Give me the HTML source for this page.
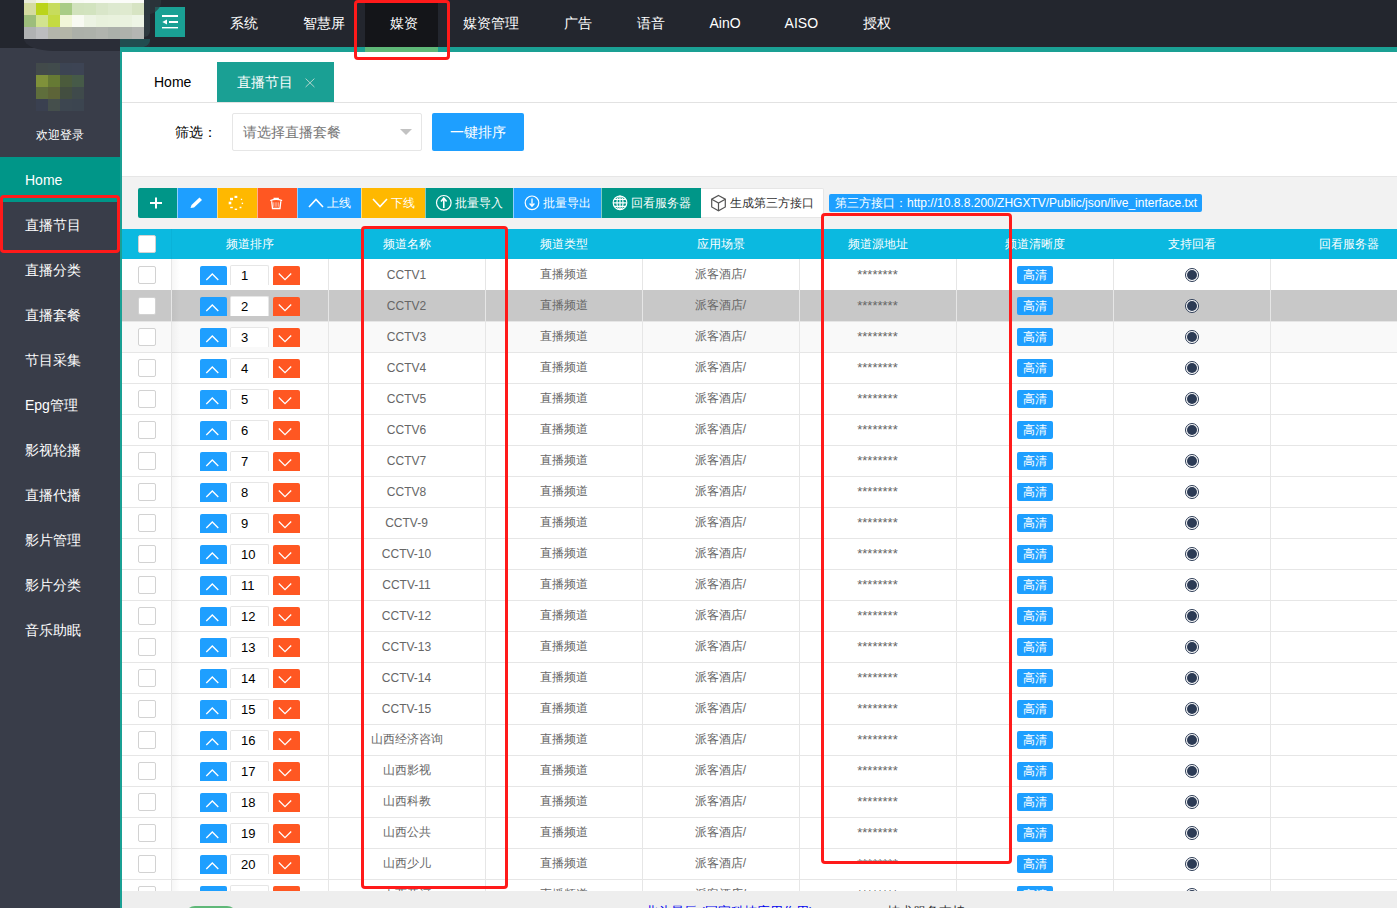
<!DOCTYPE html>
<html><head><meta charset="utf-8"><style>
*{box-sizing:border-box;margin:0;padding:0}
html,body{width:1397px;height:908px;overflow:hidden}
body{position:relative;font-family:"Liberation Sans",sans-serif;background:#f2f2f2;color:#333}
.abs{position:absolute}
.hdr{left:0;top:0;width:1397px;height:48px;background:#23262e}
.nav{top:1px;height:48px;line-height:44px;color:#fff;font-size:14px;text-align:center;white-space:nowrap}
.side{left:0;top:48px;width:120px;height:860px;background:#393d49}
.sitem{left:0;width:120px;height:45px;line-height:47px;padding-left:25px;color:#fff;font-size:14px}
.tb{top:188px;height:30px;line-height:30px;color:#fff;font-size:12px;text-align:center;white-space:nowrap}
.th{top:229px;height:30px;line-height:30px;color:#fff;font-size:12px;text-align:center;white-space:nowrap}
.td{height:31px;line-height:31px;color:#666;font-size:12px;text-align:center;white-space:nowrap}
.vl{width:1px;background:#e6e6e6}
.hl{height:1px;background:#e6e6e6;left:122px;width:1275px}
.cb{width:18px;height:18px;border:1px solid #d2d2d2;background:#fff;border-radius:2px}
.up{width:27px;height:19px;background:#1e9fff;border-radius:2px 2px 0 0}
.dn{width:27px;height:19px;background:#ff5722;border-radius:2px 2px 0 0}
.inp{width:39px;height:20px;background:#fff;border:1px solid #e6e6e6;border-bottom:none;font-size:13px;line-height:19px;color:#000;padding-left:10px;border-radius:2px 2px 0 0;text-align:left}
.badge{width:36px;height:18px;line-height:18px;background:#1e9fff;color:#fff;font-size:12px;border-radius:2px;text-align:center}
.radio{width:14px;height:14px;border-radius:50%;border:1px solid #2c3b55;background:#fff}
.radio:after{content:"";position:absolute;left:1px;top:1px;width:10px;height:10px;border-radius:50%;background:#2c3b55}
.red{border:3px solid #ff1a1a;border-radius:4px}
.ast{padding-top:2px}
</style></head><body>

<div class="abs hdr"></div>
<div class="abs" style="left:24px;top:0px;width:12px;height:3px;background:#e8ebd8"></div>
<div class="abs" style="left:36px;top:0px;width:12px;height:3px;background:#f3f5e6"></div>
<div class="abs" style="left:48px;top:0px;width:12px;height:3px;background:#fafbf5"></div>
<div class="abs" style="left:60px;top:0px;width:12px;height:3px;background:#f7f9f1"></div>
<div class="abs" style="left:72px;top:0px;width:12px;height:3px;background:#f9fbf6"></div>
<div class="abs" style="left:84px;top:0px;width:12px;height:3px;background:#fbfcf8"></div>
<div class="abs" style="left:96px;top:0px;width:12px;height:3px;background:#fbfcf8"></div>
<div class="abs" style="left:108px;top:0px;width:12px;height:3px;background:#fbfcf8"></div>
<div class="abs" style="left:120px;top:0px;width:12px;height:3px;background:#fbfcf8"></div>
<div class="abs" style="left:132px;top:0px;width:12px;height:3px;background:#fbfcf8"></div>
<div class="abs" style="left:24px;top:3px;width:12px;height:12px;background:#d4dba0"></div>
<div class="abs" style="left:36px;top:3px;width:12px;height:12px;background:#bbd41a"></div>
<div class="abs" style="left:48px;top:3px;width:12px;height:12px;background:#c7dc5c"></div>
<div class="abs" style="left:60px;top:3px;width:12px;height:12px;background:#a9cc86"></div>
<div class="abs" style="left:72px;top:3px;width:12px;height:12px;background:#d1e2bd"></div>
<div class="abs" style="left:84px;top:3px;width:12px;height:12px;background:#d2e3bf"></div>
<div class="abs" style="left:96px;top:3px;width:12px;height:12px;background:#d9e6c9"></div>
<div class="abs" style="left:108px;top:3px;width:12px;height:12px;background:#dde9cf"></div>
<div class="abs" style="left:120px;top:3px;width:12px;height:12px;background:#dfeacf"></div>
<div class="abs" style="left:132px;top:3px;width:12px;height:12px;background:#d7e4c3"></div>
<div class="abs" style="left:24px;top:15px;width:12px;height:12px;background:#9dbd7b"></div>
<div class="abs" style="left:36px;top:15px;width:12px;height:12px;background:#d2e38f"></div>
<div class="abs" style="left:48px;top:15px;width:12px;height:12px;background:#c4da42"></div>
<div class="abs" style="left:60px;top:15px;width:12px;height:12px;background:#f1f6d8"></div>
<div class="abs" style="left:72px;top:15px;width:12px;height:12px;background:#f8faf3"></div>
<div class="abs" style="left:84px;top:15px;width:12px;height:12px;background:#ecf3e3"></div>
<div class="abs" style="left:96px;top:15px;width:12px;height:12px;background:#e8f1dc"></div>
<div class="abs" style="left:108px;top:15px;width:12px;height:12px;background:#e9f2dd"></div>
<div class="abs" style="left:120px;top:15px;width:12px;height:12px;background:#eaf2df"></div>
<div class="abs" style="left:132px;top:15px;width:12px;height:12px;background:#eef5e6"></div>
<div class="abs" style="left:24px;top:27px;width:12px;height:12px;background:#b0b2b3"></div>
<div class="abs" style="left:36px;top:27px;width:12px;height:12px;background:#bcbdbf"></div>
<div class="abs" style="left:48px;top:27px;width:12px;height:12px;background:#b3b5ab"></div>
<div class="abs" style="left:60px;top:27px;width:12px;height:12px;background:#b4b6a8"></div>
<div class="abs" style="left:72px;top:27px;width:12px;height:12px;background:#acb0a9"></div>
<div class="abs" style="left:84px;top:27px;width:12px;height:12px;background:#adb1aa"></div>
<div class="abs" style="left:96px;top:27px;width:12px;height:12px;background:#b1b4ae"></div>
<div class="abs" style="left:108px;top:27px;width:12px;height:12px;background:#abb0aa"></div>
<div class="abs" style="left:120px;top:27px;width:12px;height:12px;background:#aeb2ac"></div>
<div class="abs" style="left:132px;top:27px;width:12px;height:12px;background:#b4b6b3"></div>
<div class="abs" style="left:155px;top:7px;width:30px;height:30px;background:#1aa094"></div>
<svg class="abs" style="left:155px;top:7px" width="30" height="30" viewBox="0 0 30 30"><g fill="#fff"><rect x="7" y="8" width="16" height="2"/><rect x="14" y="14" width="9" height="2"/><rect x="7" y="20" width="16" height="1.4"/><path d="M7.3 15 L12 12.6 L12 17.4 Z"/></g></svg>
<div class="abs" style="left:144px;top:0;width:6px;height:37px;border-radius:0 0 6px 0;background:#2e393f"></div>
<div class="abs" style="left:144px;top:0;width:17px;height:15px;border-radius:0 0 17px 0/0 0 13px 0;background:rgba(46,57,63,.7)"></div>
<div class="abs" style="left:365px;top:0;width:73px;height:47px;background:#141519"></div>
<div class="abs" style="left:120px;top:47px;width:1277px;height:5px;background:#1aa094"></div>
<div class="abs" style="left:365px;top:47px;width:73px;height:5px;background:#5fb878"></div>
<div class="abs nav" style="left:194.4px;width:100px">系统</div>
<div class="abs nav" style="left:274px;width:100px">智慧屏</div>
<div class="abs nav" style="left:353.5px;width:100px">媒资</div>
<div class="abs nav" style="left:440.7px;width:100px">媒资管理</div>
<div class="abs nav" style="left:527.5px;width:100px">广告</div>
<div class="abs nav" style="left:600.6px;width:100px">语音</div>
<div class="abs nav" style="left:675px;width:100px">AinO</div>
<div class="abs nav" style="left:751.3px;width:100px">AISO</div>
<div class="abs nav" style="left:826.5px;width:100px">授权</div>
<div class="abs side"></div>
<div class="abs" style="left:36px;top:63px;width:12px;height:12px;background:#424a4a"></div>
<div class="abs" style="left:48px;top:63px;width:12px;height:12px;background:#414b4c"></div>
<div class="abs" style="left:60px;top:63px;width:12px;height:12px;background:#3c4453"></div>
<div class="abs" style="left:72px;top:63px;width:12px;height:12px;background:#3d4454"></div>
<div class="abs" style="left:36px;top:75px;width:12px;height:12px;background:#7f913a"></div>
<div class="abs" style="left:48px;top:75px;width:12px;height:12px;background:#667a34"></div>
<div class="abs" style="left:60px;top:75px;width:12px;height:12px;background:#4b5b3c"></div>
<div class="abs" style="left:72px;top:75px;width:12px;height:12px;background:#465a48"></div>
<div class="abs" style="left:36px;top:87px;width:12px;height:12px;background:#5f6e3c"></div>
<div class="abs" style="left:48px;top:87px;width:12px;height:12px;background:#5d6438"></div>
<div class="abs" style="left:60px;top:87px;width:12px;height:12px;background:#434e40"></div>
<div class="abs" style="left:72px;top:87px;width:12px;height:12px;background:#3f4a4b"></div>
<div class="abs" style="left:36px;top:99px;width:12px;height:12px;background:#3a4050"></div>
<div class="abs" style="left:48px;top:99px;width:12px;height:12px;background:#454f4c"></div>
<div class="abs" style="left:60px;top:99px;width:12px;height:12px;background:#3d4650"></div>
<div class="abs" style="left:72px;top:99px;width:12px;height:12px;background:#3c4550"></div>
<div class="abs" style="left:0;top:125px;width:120px;height:20px;line-height:20px;text-align:center;color:#fff;font-size:12px">欢迎登录</div>
<div class="abs" style="left:0;top:157px;width:120px;height:45px;background:#009688"></div>
<div class="abs sitem" style="top:157px">Home</div>
<div class="abs sitem" style="top:202px">直播节目</div>
<div class="abs sitem" style="top:247px">直播分类</div>
<div class="abs sitem" style="top:292px">直播套餐</div>
<div class="abs sitem" style="top:337px">节目采集</div>
<div class="abs sitem" style="top:382px">Epg管理</div>
<div class="abs sitem" style="top:427px">影视轮播</div>
<div class="abs sitem" style="top:472px">直播代播</div>
<div class="abs sitem" style="top:517px">影片管理</div>
<div class="abs sitem" style="top:562px">影片分类</div>
<div class="abs sitem" style="top:607px">音乐助眠</div>
<div class="abs" style="left:24px;top:39px;width:126px;height:12px;border-radius:0 0 10px 30px/0 0 6px 12px;background:#2a2d37"></div>
<div class="abs" style="left:120px;top:48px;width:2px;height:860px;background:#1aa094"></div>
<div class="abs" style="left:120px;top:39px;width:30px;height:9px;border-radius:0 0 12px 0/0 0 8px 0;background:#214c50"></div>
<div class="abs" style="left:120px;top:47px;width:1277px;height:5px;background:#1aa094"></div>
<div class="abs" style="left:122px;top:52px;width:1275px;height:124px;background:#fff"></div>
<div class="abs" style="left:365px;top:47px;width:73px;height:5px;background:#5fb878"></div>
<div class="abs" style="left:122px;top:102px;width:1275px;height:1px;background:#e2e2e2"></div>
<div class="abs" style="left:122px;top:176px;width:1275px;height:1px;background:#e6e6e6"></div>
<div class="abs" style="left:122px;top:52px;width:95px;height:50px;line-height:60px;padding-left:32px;font-size:14px;color:#000">Home</div>
<div class="abs" style="left:217px;top:62px;width:117px;height:40px;background:#1aa094;color:#fff;font-size:14px;line-height:40px;padding-left:20px">直播节目<svg style="position:absolute;left:88px;top:16px" width="10" height="10"><path d="M0.6 0.6 L9.4 9 M9.4 0.6 L0.6 9" stroke="#c3dbd3" stroke-width="0.9"/></svg></div>
<div class="abs" style="left:175px;top:122px;height:20px;line-height:20px;font-size:14px;color:#000">筛选：</div>
<div class="abs" style="left:232px;top:113px;width:190px;height:38px;border:1px solid #e6e6e6;border-radius:2px;background:#fff;line-height:36px;padding-left:10px;font-size:14px;color:#757575">请选择直播套餐</div>
<div class="abs" style="left:400px;top:129px;width:0;height:0;border-left:6px solid transparent;border-right:6px solid transparent;border-top:6px solid #c2c2c2"></div>
<div class="abs" style="left:432px;top:113px;width:92px;height:38px;background:#1e9fff;border-radius:2px;color:#fff;font-size:14px;line-height:38px;text-align:center">一键排序</div>
<div class="abs tb" style="left:138px;width:39px;background:#009688;border-radius:2px 0 0 2px;"></div>
<div class="abs tb" style="left:177px;width:40px;background:#1e9fff;"></div>
<div class="abs tb" style="left:217px;width:40px;background:#ffb800;"></div>
<div class="abs tb" style="left:257px;width:40px;background:#ff5722;"></div>
<div class="abs tb" style="left:297px;width:64px;background:#1e9fff;"></div>
<div class="abs tb" style="left:361px;width:64px;background:#ffb800;"></div>
<div class="abs tb" style="left:425px;width:88px;background:#009688;"></div>
<div class="abs tb" style="left:513px;width:88px;background:#1e9fff;"></div>
<div class="abs tb" style="left:601px;width:100px;background:#009688;"></div>
<div class="abs" style="left:701px;top:188px;width:123px;height:30px;background:#fff;border:1px solid #e6e6e6;border-left:none;border-radius:0 2px 2px 0"></div>
<div class="abs" style="left:177px;top:188px;width:1px;height:30px;background:rgba(255,255,255,.5)"></div>
<div class="abs" style="left:217px;top:188px;width:1px;height:30px;background:rgba(255,255,255,.5)"></div>
<div class="abs" style="left:257px;top:188px;width:1px;height:30px;background:rgba(255,255,255,.5)"></div>
<div class="abs" style="left:297px;top:188px;width:1px;height:30px;background:rgba(255,255,255,.5)"></div>
<div class="abs" style="left:361px;top:188px;width:1px;height:30px;background:rgba(255,255,255,.5)"></div>
<div class="abs" style="left:425px;top:188px;width:1px;height:30px;background:rgba(255,255,255,.5)"></div>
<div class="abs" style="left:513px;top:188px;width:1px;height:30px;background:rgba(255,255,255,.5)"></div>
<div class="abs" style="left:601px;top:188px;width:1px;height:30px;background:rgba(255,255,255,.5)"></div>
<svg class="abs" style="left:138px;top:188px" width="686" height="30" viewBox="138 188 686 30"><g fill="#fff"><rect x="150" y="202" width="12" height="2"/><rect x="155" y="197.5" width="2" height="11"/></g><path d="M190.5 208 L191.5 205 L199.5 197.5 L202 200 L194 207.5 Z" fill="#fff"/><g fill="#fff"><rect x="234.50" y="195.80" width="2.8" height="2.2"/><rect x="230.00" y="197.80" width="3" height="2.4"/><rect x="228.70" y="201.70" width="2.6" height="2.6"/><rect x="230.20" y="206.80" width="2.6" height="1.4"/><rect x="234.70" y="208.60" width="2.4" height="1.4"/><rect x="239.60" y="206.75" width="1.8" height="1.5"/><rect x="241.70" y="202.70" width="1.4" height="1.4"/><rect x="240.85" y="198.75" width="1.3" height="1.3"/></g><g fill="none" stroke="#fff" stroke-width="1.3"><path d="M270.3 200.6 Q276.2 198.2 282.1 200.6"/><path d="M274.2 199.2 V198.3 H278.2 V199.2"/><path d="M271.7 201.3 L272.5 208.5 H280 L280.8 201.3"/></g><path d="M273.6 202.3 V206.8 M275.2 202.3 V206.8 M276.8 202.3 V206.8 M278.4 202.3 V206.8" stroke="rgba(255,255,255,.55)" stroke-width="0.9"/><path d="M309 207 L316 199.5 L323 207" fill="none" stroke="#fff" stroke-width="1.6"/><path d="M373 199 L380 206.5 L387 199" fill="none" stroke="#fff" stroke-width="1.6"/><circle cx="443.8" cy="202.8" r="7.3" fill="none" stroke="#fff" stroke-width="1.2"/><path d="M443.8 208 V199 M441 201.5 L443.8 198 L446.6 201.5" fill="none" stroke="#fff" stroke-width="1.6"/><circle cx="532" cy="202.8" r="6.8" fill="none" stroke="#fff" stroke-width="1.2"/><path d="M532 198.5 V206 M529.6 203.5 L532 206.2 L534.4 203.5" fill="none" stroke="#fff" stroke-width="1.3"/><g fill="none" stroke="#fff" stroke-width="1.2"><circle cx="620" cy="202.8" r="6.8"/><ellipse cx="620" cy="202.8" rx="3" ry="6.8"/><path d="M613.2 202.8 H626.8 M614.2 199.3 H625.8 M614.2 206.3 H625.8 M620 196 V209.6"/></g><g fill="none" stroke="#555" stroke-width="1.2"><path d="M718.5 195.5 L725.3 199.2 V207 L718.5 210.8 L711.7 207 V199.2 Z"/><path d="M711.7 199.2 L718.5 203 L725.3 199.2 M718.5 203 V210.8"/></g></svg>
<div class="abs tb" style="left:327px;text-align:left">上线</div>
<div class="abs tb" style="left:391px;text-align:left">下线</div>
<div class="abs tb" style="left:455px;text-align:left">批量导入</div>
<div class="abs tb" style="left:543px;text-align:left">批量导出</div>
<div class="abs tb" style="left:631px;text-align:left">回看服务器</div>
<div class="abs tb" style="left:730px;text-align:left;color:#333">生成第三方接口</div>
<div class="abs" style="left:829px;top:194px;width:373px;height:18px;background:#1e9fff;border-radius:2px;color:#fff;font-size:12px;line-height:18px;padding-left:6px;white-space:nowrap">第三方接口：http://10.8.8.200/ZHGXTV/Public/json/live_interface.txt</div>
<div class="abs" style="left:122px;top:229px;width:1275px;height:30px;background:#0bb9e0"></div>
<div class="abs" style="left:171px;top:229px;width:1px;height:30px;background:#0ab2d8"></div>
<div class="abs cb" style="left:138px;top:235px"></div>
<div class="abs th" style="left:171px;width:157px">频道排序</div>
<div class="abs th" style="left:328px;width:157px">频道名称</div>
<div class="abs th" style="left:485px;width:157px">频道类型</div>
<div class="abs th" style="left:642px;width:157px">应用场景</div>
<div class="abs th" style="left:799px;width:157px">频道源地址</div>
<div class="abs th" style="left:956px;width:157px">频道清晰度</div>
<div class="abs th" style="left:1113px;width:157px">支持回看</div>
<div class="abs th" style="left:1270px;width:157px">回看服务器</div>
<div class="abs" style="left:122px;top:259px;width:1275px;height:632px;background:#fff"></div>
<div class="abs cb" style="left:138px;top:266px"></div>
<div class="abs up" style="left:200px;top:266px"></div>
<div class="abs inp" style="left:230px;top:265px">1</div>
<div class="abs dn" style="left:273px;top:266px"></div>
<div class="abs td" style="left:328px;top:260px;width:157px">CCTV1</div>
<div class="abs td" style="left:485px;top:259px;width:157px">直播频道</div>
<div class="abs td" style="left:642px;top:259px;width:157px">派客酒店/</div>
<div class="abs td" style="left:799px;top:259px;width:157px;font-size:13px;padding-top:0">********</div>
<div class="abs badge" style="left:1017px;top:266px">高清</div>
<div class="abs radio" style="left:1185px;top:268px"></div>
<div class="abs" style="left:122px;top:290px;width:1275px;height:31px;background:#c8c8c8"></div>
<div class="abs cb" style="left:138px;top:297px"></div>
<div class="abs up" style="left:200px;top:297px"></div>
<div class="abs inp" style="left:230px;top:296px">2</div>
<div class="abs dn" style="left:273px;top:297px"></div>
<div class="abs td" style="left:328px;top:291px;width:157px">CCTV2</div>
<div class="abs td" style="left:485px;top:290px;width:157px">直播频道</div>
<div class="abs td" style="left:642px;top:290px;width:157px">派客酒店/</div>
<div class="abs td" style="left:799px;top:290px;width:157px;font-size:13px;padding-top:0">********</div>
<div class="abs badge" style="left:1017px;top:297px">高清</div>
<div class="abs radio" style="left:1185px;top:299px"></div>
<div class="abs" style="left:122px;top:321px;width:1275px;height:31px;background:#f9f9f9"></div>
<div class="abs hl" style="top:321px"></div>
<div class="abs cb" style="left:138px;top:328px"></div>
<div class="abs up" style="left:200px;top:328px"></div>
<div class="abs inp" style="left:230px;top:327px">3</div>
<div class="abs dn" style="left:273px;top:328px"></div>
<div class="abs td" style="left:328px;top:322px;width:157px">CCTV3</div>
<div class="abs td" style="left:485px;top:321px;width:157px">直播频道</div>
<div class="abs td" style="left:642px;top:321px;width:157px">派客酒店/</div>
<div class="abs td" style="left:799px;top:321px;width:157px;font-size:13px;padding-top:0">********</div>
<div class="abs badge" style="left:1017px;top:328px">高清</div>
<div class="abs radio" style="left:1185px;top:330px"></div>
<div class="abs hl" style="top:352px"></div>
<div class="abs cb" style="left:138px;top:359px"></div>
<div class="abs up" style="left:200px;top:359px"></div>
<div class="abs inp" style="left:230px;top:358px">4</div>
<div class="abs dn" style="left:273px;top:359px"></div>
<div class="abs td" style="left:328px;top:353px;width:157px">CCTV4</div>
<div class="abs td" style="left:485px;top:352px;width:157px">直播频道</div>
<div class="abs td" style="left:642px;top:352px;width:157px">派客酒店/</div>
<div class="abs td" style="left:799px;top:352px;width:157px;font-size:13px;padding-top:0">********</div>
<div class="abs badge" style="left:1017px;top:359px">高清</div>
<div class="abs radio" style="left:1185px;top:361px"></div>
<div class="abs hl" style="top:383px"></div>
<div class="abs cb" style="left:138px;top:390px"></div>
<div class="abs up" style="left:200px;top:390px"></div>
<div class="abs inp" style="left:230px;top:389px">5</div>
<div class="abs dn" style="left:273px;top:390px"></div>
<div class="abs td" style="left:328px;top:384px;width:157px">CCTV5</div>
<div class="abs td" style="left:485px;top:383px;width:157px">直播频道</div>
<div class="abs td" style="left:642px;top:383px;width:157px">派客酒店/</div>
<div class="abs td" style="left:799px;top:383px;width:157px;font-size:13px;padding-top:0">********</div>
<div class="abs badge" style="left:1017px;top:390px">高清</div>
<div class="abs radio" style="left:1185px;top:392px"></div>
<div class="abs hl" style="top:414px"></div>
<div class="abs cb" style="left:138px;top:421px"></div>
<div class="abs up" style="left:200px;top:421px"></div>
<div class="abs inp" style="left:230px;top:420px">6</div>
<div class="abs dn" style="left:273px;top:421px"></div>
<div class="abs td" style="left:328px;top:415px;width:157px">CCTV6</div>
<div class="abs td" style="left:485px;top:414px;width:157px">直播频道</div>
<div class="abs td" style="left:642px;top:414px;width:157px">派客酒店/</div>
<div class="abs td" style="left:799px;top:414px;width:157px;font-size:13px;padding-top:0">********</div>
<div class="abs badge" style="left:1017px;top:421px">高清</div>
<div class="abs radio" style="left:1185px;top:423px"></div>
<div class="abs hl" style="top:445px"></div>
<div class="abs cb" style="left:138px;top:452px"></div>
<div class="abs up" style="left:200px;top:452px"></div>
<div class="abs inp" style="left:230px;top:451px">7</div>
<div class="abs dn" style="left:273px;top:452px"></div>
<div class="abs td" style="left:328px;top:446px;width:157px">CCTV7</div>
<div class="abs td" style="left:485px;top:445px;width:157px">直播频道</div>
<div class="abs td" style="left:642px;top:445px;width:157px">派客酒店/</div>
<div class="abs td" style="left:799px;top:445px;width:157px;font-size:13px;padding-top:0">********</div>
<div class="abs badge" style="left:1017px;top:452px">高清</div>
<div class="abs radio" style="left:1185px;top:454px"></div>
<div class="abs hl" style="top:476px"></div>
<div class="abs cb" style="left:138px;top:483px"></div>
<div class="abs up" style="left:200px;top:483px"></div>
<div class="abs inp" style="left:230px;top:482px">8</div>
<div class="abs dn" style="left:273px;top:483px"></div>
<div class="abs td" style="left:328px;top:477px;width:157px">CCTV8</div>
<div class="abs td" style="left:485px;top:476px;width:157px">直播频道</div>
<div class="abs td" style="left:642px;top:476px;width:157px">派客酒店/</div>
<div class="abs td" style="left:799px;top:476px;width:157px;font-size:13px;padding-top:0">********</div>
<div class="abs badge" style="left:1017px;top:483px">高清</div>
<div class="abs radio" style="left:1185px;top:485px"></div>
<div class="abs hl" style="top:507px"></div>
<div class="abs cb" style="left:138px;top:514px"></div>
<div class="abs up" style="left:200px;top:514px"></div>
<div class="abs inp" style="left:230px;top:513px">9</div>
<div class="abs dn" style="left:273px;top:514px"></div>
<div class="abs td" style="left:328px;top:508px;width:157px">CCTV-9</div>
<div class="abs td" style="left:485px;top:507px;width:157px">直播频道</div>
<div class="abs td" style="left:642px;top:507px;width:157px">派客酒店/</div>
<div class="abs td" style="left:799px;top:507px;width:157px;font-size:13px;padding-top:0">********</div>
<div class="abs badge" style="left:1017px;top:514px">高清</div>
<div class="abs radio" style="left:1185px;top:516px"></div>
<div class="abs hl" style="top:538px"></div>
<div class="abs cb" style="left:138px;top:545px"></div>
<div class="abs up" style="left:200px;top:545px"></div>
<div class="abs inp" style="left:230px;top:544px">10</div>
<div class="abs dn" style="left:273px;top:545px"></div>
<div class="abs td" style="left:328px;top:539px;width:157px">CCTV-10</div>
<div class="abs td" style="left:485px;top:538px;width:157px">直播频道</div>
<div class="abs td" style="left:642px;top:538px;width:157px">派客酒店/</div>
<div class="abs td" style="left:799px;top:538px;width:157px;font-size:13px;padding-top:0">********</div>
<div class="abs badge" style="left:1017px;top:545px">高清</div>
<div class="abs radio" style="left:1185px;top:547px"></div>
<div class="abs hl" style="top:569px"></div>
<div class="abs cb" style="left:138px;top:576px"></div>
<div class="abs up" style="left:200px;top:576px"></div>
<div class="abs inp" style="left:230px;top:575px">11</div>
<div class="abs dn" style="left:273px;top:576px"></div>
<div class="abs td" style="left:328px;top:570px;width:157px">CCTV-11</div>
<div class="abs td" style="left:485px;top:569px;width:157px">直播频道</div>
<div class="abs td" style="left:642px;top:569px;width:157px">派客酒店/</div>
<div class="abs td" style="left:799px;top:569px;width:157px;font-size:13px;padding-top:0">********</div>
<div class="abs badge" style="left:1017px;top:576px">高清</div>
<div class="abs radio" style="left:1185px;top:578px"></div>
<div class="abs hl" style="top:600px"></div>
<div class="abs cb" style="left:138px;top:607px"></div>
<div class="abs up" style="left:200px;top:607px"></div>
<div class="abs inp" style="left:230px;top:606px">12</div>
<div class="abs dn" style="left:273px;top:607px"></div>
<div class="abs td" style="left:328px;top:601px;width:157px">CCTV-12</div>
<div class="abs td" style="left:485px;top:600px;width:157px">直播频道</div>
<div class="abs td" style="left:642px;top:600px;width:157px">派客酒店/</div>
<div class="abs td" style="left:799px;top:600px;width:157px;font-size:13px;padding-top:0">********</div>
<div class="abs badge" style="left:1017px;top:607px">高清</div>
<div class="abs radio" style="left:1185px;top:609px"></div>
<div class="abs hl" style="top:631px"></div>
<div class="abs cb" style="left:138px;top:638px"></div>
<div class="abs up" style="left:200px;top:638px"></div>
<div class="abs inp" style="left:230px;top:637px">13</div>
<div class="abs dn" style="left:273px;top:638px"></div>
<div class="abs td" style="left:328px;top:632px;width:157px">CCTV-13</div>
<div class="abs td" style="left:485px;top:631px;width:157px">直播频道</div>
<div class="abs td" style="left:642px;top:631px;width:157px">派客酒店/</div>
<div class="abs td" style="left:799px;top:631px;width:157px;font-size:13px;padding-top:0">********</div>
<div class="abs badge" style="left:1017px;top:638px">高清</div>
<div class="abs radio" style="left:1185px;top:640px"></div>
<div class="abs hl" style="top:662px"></div>
<div class="abs cb" style="left:138px;top:669px"></div>
<div class="abs up" style="left:200px;top:669px"></div>
<div class="abs inp" style="left:230px;top:668px">14</div>
<div class="abs dn" style="left:273px;top:669px"></div>
<div class="abs td" style="left:328px;top:663px;width:157px">CCTV-14</div>
<div class="abs td" style="left:485px;top:662px;width:157px">直播频道</div>
<div class="abs td" style="left:642px;top:662px;width:157px">派客酒店/</div>
<div class="abs td" style="left:799px;top:662px;width:157px;font-size:13px;padding-top:0">********</div>
<div class="abs badge" style="left:1017px;top:669px">高清</div>
<div class="abs radio" style="left:1185px;top:671px"></div>
<div class="abs hl" style="top:693px"></div>
<div class="abs cb" style="left:138px;top:700px"></div>
<div class="abs up" style="left:200px;top:700px"></div>
<div class="abs inp" style="left:230px;top:699px">15</div>
<div class="abs dn" style="left:273px;top:700px"></div>
<div class="abs td" style="left:328px;top:694px;width:157px">CCTV-15</div>
<div class="abs td" style="left:485px;top:693px;width:157px">直播频道</div>
<div class="abs td" style="left:642px;top:693px;width:157px">派客酒店/</div>
<div class="abs td" style="left:799px;top:693px;width:157px;font-size:13px;padding-top:0">********</div>
<div class="abs badge" style="left:1017px;top:700px">高清</div>
<div class="abs radio" style="left:1185px;top:702px"></div>
<div class="abs hl" style="top:724px"></div>
<div class="abs cb" style="left:138px;top:731px"></div>
<div class="abs up" style="left:200px;top:731px"></div>
<div class="abs inp" style="left:230px;top:730px">16</div>
<div class="abs dn" style="left:273px;top:731px"></div>
<div class="abs td" style="left:328px;top:724px;width:157px">山西经济咨询</div>
<div class="abs td" style="left:485px;top:724px;width:157px">直播频道</div>
<div class="abs td" style="left:642px;top:724px;width:157px">派客酒店/</div>
<div class="abs td" style="left:799px;top:724px;width:157px;font-size:13px;padding-top:0">********</div>
<div class="abs badge" style="left:1017px;top:731px">高清</div>
<div class="abs radio" style="left:1185px;top:733px"></div>
<div class="abs hl" style="top:755px"></div>
<div class="abs cb" style="left:138px;top:762px"></div>
<div class="abs up" style="left:200px;top:762px"></div>
<div class="abs inp" style="left:230px;top:761px">17</div>
<div class="abs dn" style="left:273px;top:762px"></div>
<div class="abs td" style="left:328px;top:755px;width:157px">山西影视</div>
<div class="abs td" style="left:485px;top:755px;width:157px">直播频道</div>
<div class="abs td" style="left:642px;top:755px;width:157px">派客酒店/</div>
<div class="abs td" style="left:799px;top:755px;width:157px;font-size:13px;padding-top:0">********</div>
<div class="abs badge" style="left:1017px;top:762px">高清</div>
<div class="abs radio" style="left:1185px;top:764px"></div>
<div class="abs hl" style="top:786px"></div>
<div class="abs cb" style="left:138px;top:793px"></div>
<div class="abs up" style="left:200px;top:793px"></div>
<div class="abs inp" style="left:230px;top:792px">18</div>
<div class="abs dn" style="left:273px;top:793px"></div>
<div class="abs td" style="left:328px;top:786px;width:157px">山西科教</div>
<div class="abs td" style="left:485px;top:786px;width:157px">直播频道</div>
<div class="abs td" style="left:642px;top:786px;width:157px">派客酒店/</div>
<div class="abs td" style="left:799px;top:786px;width:157px;font-size:13px;padding-top:0">********</div>
<div class="abs badge" style="left:1017px;top:793px">高清</div>
<div class="abs radio" style="left:1185px;top:795px"></div>
<div class="abs hl" style="top:817px"></div>
<div class="abs cb" style="left:138px;top:824px"></div>
<div class="abs up" style="left:200px;top:824px"></div>
<div class="abs inp" style="left:230px;top:823px">19</div>
<div class="abs dn" style="left:273px;top:824px"></div>
<div class="abs td" style="left:328px;top:817px;width:157px">山西公共</div>
<div class="abs td" style="left:485px;top:817px;width:157px">直播频道</div>
<div class="abs td" style="left:642px;top:817px;width:157px">派客酒店/</div>
<div class="abs td" style="left:799px;top:817px;width:157px;font-size:13px;padding-top:0">********</div>
<div class="abs badge" style="left:1017px;top:824px">高清</div>
<div class="abs radio" style="left:1185px;top:826px"></div>
<div class="abs hl" style="top:848px"></div>
<div class="abs cb" style="left:138px;top:855px"></div>
<div class="abs up" style="left:200px;top:855px"></div>
<div class="abs inp" style="left:230px;top:854px">20</div>
<div class="abs dn" style="left:273px;top:855px"></div>
<div class="abs td" style="left:328px;top:848px;width:157px">山西少儿</div>
<div class="abs td" style="left:485px;top:848px;width:157px">直播频道</div>
<div class="abs td" style="left:642px;top:848px;width:157px">派客酒店/</div>
<div class="abs td" style="left:799px;top:848px;width:157px;font-size:13px;padding-top:0">********</div>
<div class="abs badge" style="left:1017px;top:855px">高清</div>
<div class="abs radio" style="left:1185px;top:857px"></div>
<div class="abs hl" style="top:879px"></div>
<div class="abs cb" style="left:138px;top:886px"></div>
<div class="abs up" style="left:200px;top:886px"></div>
<div class="abs inp" style="left:230px;top:885px">21</div>
<div class="abs dn" style="left:273px;top:886px"></div>
<div class="abs td" style="left:328px;top:879px;width:157px">山西黄河</div>
<div class="abs td" style="left:485px;top:879px;width:157px">直播频道</div>
<div class="abs td" style="left:642px;top:879px;width:157px">派客酒店/</div>
<div class="abs td" style="left:799px;top:879px;width:157px;font-size:13px;padding-top:0">********</div>
<div class="abs badge" style="left:1017px;top:886px">高清</div>
<div class="abs radio" style="left:1185px;top:888px"></div>
<svg class="abs" style="left:0;top:0" width="1397" height="908"><path d="M206.3 280 L212.3 274 L218.3 280" fill="none" stroke="#fff" stroke-width="1.3"/><path d="M278.8 273.5 L285 279.7 L291.2 273.5" fill="none" stroke="#fff" stroke-width="1.3"/><path d="M206.3 311 L212.3 305 L218.3 311" fill="none" stroke="#fff" stroke-width="1.3"/><path d="M278.8 304.5 L285 310.7 L291.2 304.5" fill="none" stroke="#fff" stroke-width="1.3"/><path d="M206.3 342 L212.3 336 L218.3 342" fill="none" stroke="#fff" stroke-width="1.3"/><path d="M278.8 335.5 L285 341.7 L291.2 335.5" fill="none" stroke="#fff" stroke-width="1.3"/><path d="M206.3 373 L212.3 367 L218.3 373" fill="none" stroke="#fff" stroke-width="1.3"/><path d="M278.8 366.5 L285 372.7 L291.2 366.5" fill="none" stroke="#fff" stroke-width="1.3"/><path d="M206.3 404 L212.3 398 L218.3 404" fill="none" stroke="#fff" stroke-width="1.3"/><path d="M278.8 397.5 L285 403.7 L291.2 397.5" fill="none" stroke="#fff" stroke-width="1.3"/><path d="M206.3 435 L212.3 429 L218.3 435" fill="none" stroke="#fff" stroke-width="1.3"/><path d="M278.8 428.5 L285 434.7 L291.2 428.5" fill="none" stroke="#fff" stroke-width="1.3"/><path d="M206.3 466 L212.3 460 L218.3 466" fill="none" stroke="#fff" stroke-width="1.3"/><path d="M278.8 459.5 L285 465.7 L291.2 459.5" fill="none" stroke="#fff" stroke-width="1.3"/><path d="M206.3 497 L212.3 491 L218.3 497" fill="none" stroke="#fff" stroke-width="1.3"/><path d="M278.8 490.5 L285 496.7 L291.2 490.5" fill="none" stroke="#fff" stroke-width="1.3"/><path d="M206.3 528 L212.3 522 L218.3 528" fill="none" stroke="#fff" stroke-width="1.3"/><path d="M278.8 521.5 L285 527.7 L291.2 521.5" fill="none" stroke="#fff" stroke-width="1.3"/><path d="M206.3 559 L212.3 553 L218.3 559" fill="none" stroke="#fff" stroke-width="1.3"/><path d="M278.8 552.5 L285 558.7 L291.2 552.5" fill="none" stroke="#fff" stroke-width="1.3"/><path d="M206.3 590 L212.3 584 L218.3 590" fill="none" stroke="#fff" stroke-width="1.3"/><path d="M278.8 583.5 L285 589.7 L291.2 583.5" fill="none" stroke="#fff" stroke-width="1.3"/><path d="M206.3 621 L212.3 615 L218.3 621" fill="none" stroke="#fff" stroke-width="1.3"/><path d="M278.8 614.5 L285 620.7 L291.2 614.5" fill="none" stroke="#fff" stroke-width="1.3"/><path d="M206.3 652 L212.3 646 L218.3 652" fill="none" stroke="#fff" stroke-width="1.3"/><path d="M278.8 645.5 L285 651.7 L291.2 645.5" fill="none" stroke="#fff" stroke-width="1.3"/><path d="M206.3 683 L212.3 677 L218.3 683" fill="none" stroke="#fff" stroke-width="1.3"/><path d="M278.8 676.5 L285 682.7 L291.2 676.5" fill="none" stroke="#fff" stroke-width="1.3"/><path d="M206.3 714 L212.3 708 L218.3 714" fill="none" stroke="#fff" stroke-width="1.3"/><path d="M278.8 707.5 L285 713.7 L291.2 707.5" fill="none" stroke="#fff" stroke-width="1.3"/><path d="M206.3 745 L212.3 739 L218.3 745" fill="none" stroke="#fff" stroke-width="1.3"/><path d="M278.8 738.5 L285 744.7 L291.2 738.5" fill="none" stroke="#fff" stroke-width="1.3"/><path d="M206.3 776 L212.3 770 L218.3 776" fill="none" stroke="#fff" stroke-width="1.3"/><path d="M278.8 769.5 L285 775.7 L291.2 769.5" fill="none" stroke="#fff" stroke-width="1.3"/><path d="M206.3 807 L212.3 801 L218.3 807" fill="none" stroke="#fff" stroke-width="1.3"/><path d="M278.8 800.5 L285 806.7 L291.2 800.5" fill="none" stroke="#fff" stroke-width="1.3"/><path d="M206.3 838 L212.3 832 L218.3 838" fill="none" stroke="#fff" stroke-width="1.3"/><path d="M278.8 831.5 L285 837.7 L291.2 831.5" fill="none" stroke="#fff" stroke-width="1.3"/><path d="M206.3 869 L212.3 863 L218.3 869" fill="none" stroke="#fff" stroke-width="1.3"/><path d="M278.8 862.5 L285 868.7 L291.2 862.5" fill="none" stroke="#fff" stroke-width="1.3"/><path d="M206.3 900 L212.3 894 L218.3 900" fill="none" stroke="#fff" stroke-width="1.3"/><path d="M278.8 893.5 L285 899.7 L291.2 893.5" fill="none" stroke="#fff" stroke-width="1.3"/></svg>
<div class="abs vl" style="left:171px;top:259px;height:632px"></div>
<div class="abs vl" style="left:328px;top:259px;height:632px"></div>
<div class="abs vl" style="left:485px;top:259px;height:632px"></div>
<div class="abs vl" style="left:642px;top:259px;height:632px"></div>
<div class="abs vl" style="left:799px;top:259px;height:632px"></div>
<div class="abs vl" style="left:956px;top:259px;height:632px"></div>
<div class="abs vl" style="left:1113px;top:259px;height:632px"></div>
<div class="abs vl" style="left:1270px;top:259px;height:632px"></div>
<div class="abs" style="left:172px;top:259px;width:8px;height:632px;background:linear-gradient(to right,rgba(0,0,0,.035),rgba(0,0,0,0))"></div>
<div class="abs" style="left:122px;top:891px;width:1275px;height:17px;background:#eeeeee"></div>
<div class="abs" style="left:185px;top:906px;width:52px;height:20px;border-radius:10px;background:#5fb878"></div>
<div class="abs" style="left:645px;top:905px;width:181px;height:14px;line-height:14px;font-size:13px;color:#0000ee;white-space:nowrap;overflow:hidden">北斗星辰 (国家科技应用作用)</div>
<div class="abs" style="left:887px;top:905px;width:83px;height:14px;line-height:14px;font-size:13px;color:#333;white-space:nowrap;overflow:hidden">技术服务支持</div>
<div class="abs red" style="left:354px;top:0;width:96px;height:60px"></div>
<div class="abs red" style="left:0;top:195px;width:120px;height:58px"></div>
<div class="abs red" style="left:361px;top:226px;width:147px;height:663px"></div>
<div class="abs red" style="left:821px;top:213px;width:191px;height:651px"></div>
</body></html>
